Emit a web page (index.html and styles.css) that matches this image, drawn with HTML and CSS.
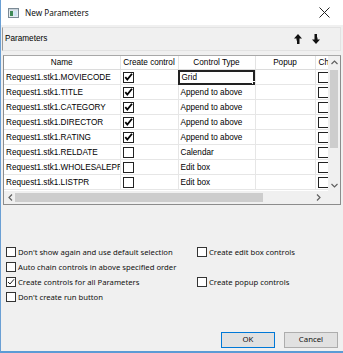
FILE: index.html
```html
<!DOCTYPE html>
<html>
<head>
<meta charset="utf-8">
<link rel="stylesheet" href="styles.css">
</head>
<body>
<div class="window">
  <div class="titlebar">
    <svg class="appicon" width="11" height="10" viewBox="0 0 11 10">
      <rect x="0.5" y="0.5" width="10" height="9" fill="#e8eef2" stroke="#7b8a95"/>
      <rect x="1" y="1" width="9" height="1.5" fill="#c8d2da"/>
      <rect x="2" y="3" width="3" height="5" fill="#3f8a56"/>
      <rect x="5.5" y="3" width="3.5" height="5" fill="#cfe4f2"/>
    </svg>
    <span class="title">New Parameters</span>
    <svg class="close" width="11" height="11" viewBox="0 0 11 11">
      <path d="M0.5 0.5 L10.5 10.5 M10.5 0.5 L0.5 10.5" stroke="#222" stroke-width="1"/>
    </svg>
  </div>

  <div class="toolbar">
    <span class="tb-label">Parameters</span>
    <div class="tb-icons">
      <svg width="8" height="10" viewBox="0 0 8 10"><path d="M4 0 L8 4.5 L5.5 4.5 L5.5 10 L3 10 L3 6.5 L2.5 6.5 L2.5 4.5 L0 4.5 Z" fill="#111"/></svg>
      <svg width="8" height="10" viewBox="0 0 8 10"><path d="M4 10 L8 5.5 L5.5 5.5 L5.5 3.5 L5 3.5 L5 0 L2.5 0 L2.5 5.5 L0 5.5 Z" fill="#111"/></svg>
    </div>
  </div>

  <div class="gridbox">
    <div class="grid-area">
      <table class="params">
        <colgroup>
          <col class="c-name"><col class="c-create"><col class="c-type"><col class="c-popup"><col class="c-ch">
        </colgroup>
        <thead>
          <tr><th>Name</th><th>Create control</th><th>Control Type</th><th>Popup</th><th class="clip">Ch</th></tr>
        </thead>
        <tbody>
          <tr><td>Request1.stk1.MOVIECODE</td><td><span class="gcb on"></span></td><td class="sel">Grid<span class="handle"></span></td><td></td><td><span class="gcb"></span></td></tr>
          <tr><td>Request1.stk1.TITLE</td><td><span class="gcb on"></span></td><td>Append to above</td><td></td><td><span class="gcb"></span></td></tr>
          <tr><td>Request1.stk1.CATEGORY</td><td><span class="gcb on"></span></td><td>Append to above</td><td></td><td><span class="gcb"></span></td></tr>
          <tr><td>Request1.stk1.DIRECTOR</td><td><span class="gcb on"></span></td><td>Append to above</td><td></td><td><span class="gcb"></span></td></tr>
          <tr><td>Request1.stk1.RATING</td><td><span class="gcb on"></span></td><td>Append to above</td><td></td><td><span class="gcb"></span></td></tr>
          <tr><td>Request1.stk1.RELDATE</td><td><span class="gcb"></span></td><td>Calendar</td><td></td><td><span class="gcb"></span></td></tr>
          <tr><td class="clipname">Request1.stk1.WHOLESALEPR</td><td><span class="gcb"></span></td><td>Edit box</td><td></td><td><span class="gcb"></span></td></tr>
          <tr><td>Request1.stk1.LISTPR</td><td><span class="gcb"></span></td><td>Edit box</td><td></td><td><span class="gcb"></span></td></tr>
        </tbody>
      </table>
    </div>
    <div class="vscroll">
      <svg class="sarrow" width="7" height="5" viewBox="0 0 7 5"><path d="M0.5 4 L3.5 1 L6.5 4" fill="none" stroke="#606060" stroke-width="1.2"/></svg>
      <div class="vtrack"><div class="vthumb"></div></div>
      <svg class="sarrow" width="7" height="5" viewBox="0 0 7 5"><path d="M0.5 1 L3.5 4 L6.5 1" fill="none" stroke="#606060" stroke-width="1.2"/></svg>
    </div>
    <div class="hscroll">
      <svg class="sarrow" width="5" height="7" viewBox="0 0 5 7"><path d="M4 0.5 L1 3.5 L4 6.5" fill="none" stroke="#606060" stroke-width="1.2"/></svg>
      <div class="htrack"><div class="hthumb"></div></div>
      <svg class="sarrow" width="5" height="7" viewBox="0 0 5 7"><path d="M1 0.5 L4 3.5 L1 6.5" fill="none" stroke="#606060" stroke-width="1.2"/></svg>
    </div>
    <div class="corner"></div>
  </div>

  <div class="options">
    <label class="opt"><span class="cb"></span>Don't show again and use default selection</label>
    <label class="opt right"><span class="cb"></span>Create edit box controls</label>
    <label class="opt"><span class="cb"></span>Auto chain controls in above specified order</label>
    <span></span>
    <label class="opt"><span class="cb on"></span>Create controls for all Parameters</label>
    <label class="opt right"><span class="cb"></span>Create popup controls</label>
    <label class="opt"><span class="cb"></span>Don't create run button</label>
    <span></span>
  </div>

  <div class="buttons">
    <button class="btn default">OK</button>
    <button class="btn">Cancel</button>
  </div>
</div>
</body>
</html>
```

FILE: styles.css
```css
html, body {
  margin: 0;
  padding: 0;
  width: 343px;
  height: 353px;
  overflow: hidden;
  background: #f0f0f0;
}

.window {
  box-sizing: border-box;
  width: 343px;
  height: 353px;
  border-left: 1px solid #6a9fd4;
  border-bottom: 2px solid #5b9bd5;
  background: #f0f0f0;
  display: flex;
  flex-direction: column;
  font-family: "Noto Sans", "Open Sans", sans-serif;
  color: #000;
}

.titlebar {
  height: 25px;
  background: #fff;
  display: flex;
  align-items: center;
  padding-left: 7px;
  padding-right: 13px;
  flex-shrink: 0;
}

.appicon { display: block; }

.title {
  font-size: 8.2px;
  margin-left: 6px;
  flex: 1;
  color: #111;
}

.close { display: block; }

.toolbar {
  margin: 2px 2px 0 1px;
  height: 22px;
  border: 1px solid #e2e2e2;
  border-left: 1px solid #9a9a9a;
  display: flex;
  align-items: center;
  justify-content: space-between;
  padding: 0 20px 0 2px;
  flex-shrink: 0;
}

.tb-label {
  font-family: "Liberation Sans", Arial, sans-serif;
  font-size: 8.2px;
  margin-top: -1px;
}

.tb-icons {
  display: flex;
  gap: 10px;
  align-items: center;
}
.tb-icons svg { display: block; }

.gridbox {
  margin: 4px 2px 0 2px;
  height: 150px;
  box-sizing: border-box;
  border: 1px solid #8c8c8c;
  border-top-color: #a8a8a8;
  background: #fff;
  display: grid;
  grid-template-columns: 1fr 12px;
  grid-template-rows: 1fr 13px;
  flex-shrink: 0;
}

.grid-area {
  overflow: hidden;
  position: relative;
}

.params {
  border-collapse: collapse;
  table-layout: fixed;
  width: 340px;
  font-family: "Liberation Sans", Arial, sans-serif;
  font-size: 8.2px;
}

.c-name { width: 116px; }
.c-create { width: 58px; }
.c-type { width: 77px; }
.c-popup { width: 60px; }
.c-ch { width: 29px; }

.params th {
  height: 13px;
  padding: 0;
  font-weight: normal;
  text-align: center;
  border-right: 1px solid #e3e3e3;
  border-bottom: 1px solid #dcdcdc;
  background: #fff;
  white-space: nowrap;
  overflow: hidden;
  vertical-align: middle;
}

.params th.clip {
  text-align: left;
  padding-left: 3px;
}

.params td {
  height: 14px;
  padding: 0 0 0 2px;
  border-right: 1px solid #e6e6e6;
  border-bottom: 1px solid #e6e6e6;
  white-space: nowrap;
  overflow: hidden;
  vertical-align: middle;
  position: relative;
}

.params td.clipname {
  text-overflow: clip;
}

.params td.sel {
  outline: 2px solid #222;
  outline-offset: -2px;
  padding-left: 3px;
}

.handle {
  position: absolute;
  right: -2px;
  bottom: -2px;
  width: 3px;
  height: 3px;
  background: #222;
  border: 1px solid #fff;
  box-sizing: content-box;
}

.gcb {
  display: block;
  box-sizing: border-box;
  width: 11px;
  height: 11px;
  border: 1px solid #222;
  background: #fff;
}

.gcb.on {
  background-image: url("data:image/svg+xml;utf8,<svg xmlns='http://www.w3.org/2000/svg' width='9' height='9' viewBox='0 0 9 9'><path d='M1.3 4.2 L3.3 6.6 L8 0.8' fill='none' stroke='%23000' stroke-width='1.8'/></svg>");
  background-repeat: no-repeat;
  background-position: center;
}

.vscroll {
  background: #f0f0f0;
  display: flex;
  flex-direction: column;
  align-items: center;
  padding-top: 4px;
  padding-bottom: 3px;
}

.vtrack {
  flex: 1;
  width: 100%;
  padding-top: 5px;
  padding-bottom: 35px;
  box-sizing: border-box;
  display: flex;
}

.vthumb {
  flex: 1;
  margin: 0 2px;
  background: #cdcdcd;
}

.hscroll {
  background: #f0f0f0;
  display: flex;
  align-items: center;
  padding: 0 7px 0 4px;
}

.htrack {
  flex: 1;
  height: 100%;
  padding: 2px 53px 2px 2px;
  box-sizing: border-box;
  display: flex;
}

.hthumb {
  flex: 1;
  background: #cdcdcd;
}

.sarrow { display: block; flex-shrink: 0; }

.corner { background: #f0f0f0; }

.options {
  display: grid;
  grid-template-columns: 191px auto;
  grid-auto-rows: 15px;
  margin: 39px 0 0 5px;
  font-size: 7.7px;
  flex-shrink: 0;
}

.opt {
  display: flex;
  align-items: center;
  white-space: nowrap;
  overflow: hidden;
  color: #111;
}

.cb {
  display: inline-block;
  box-sizing: border-box;
  width: 10px;
  height: 10px;
  border: 1px solid #333;
  background: #fff;
  margin-right: 2px;
  flex-shrink: 0;
}

.cb.on {
  background-image: url("data:image/svg+xml;utf8,<svg xmlns='http://www.w3.org/2000/svg' width='8' height='8' viewBox='0 0 8 8'><path d='M1 4 L3 6 L7 1.3' fill='none' stroke='%23222' stroke-width='1'/></svg>");
  background-repeat: no-repeat;
  background-position: center;
}

.buttons {
  margin-top: auto;
  margin-bottom: 3px;
  display: flex;
  justify-content: flex-end;
  gap: 9px;
  padding-right: 5px;
}

.btn {
  width: 54px;
  height: 16px;
  box-sizing: border-box;
  border: 1px solid #adadad;
  background: #e1e1e1;
  font-family: "Noto Sans", "Open Sans", sans-serif;
  font-size: 7.8px;
  padding: 0;
  color: #111;
  line-height: 1;
}

.btn.default {
  border: 1px solid #0078d7;
}
```
